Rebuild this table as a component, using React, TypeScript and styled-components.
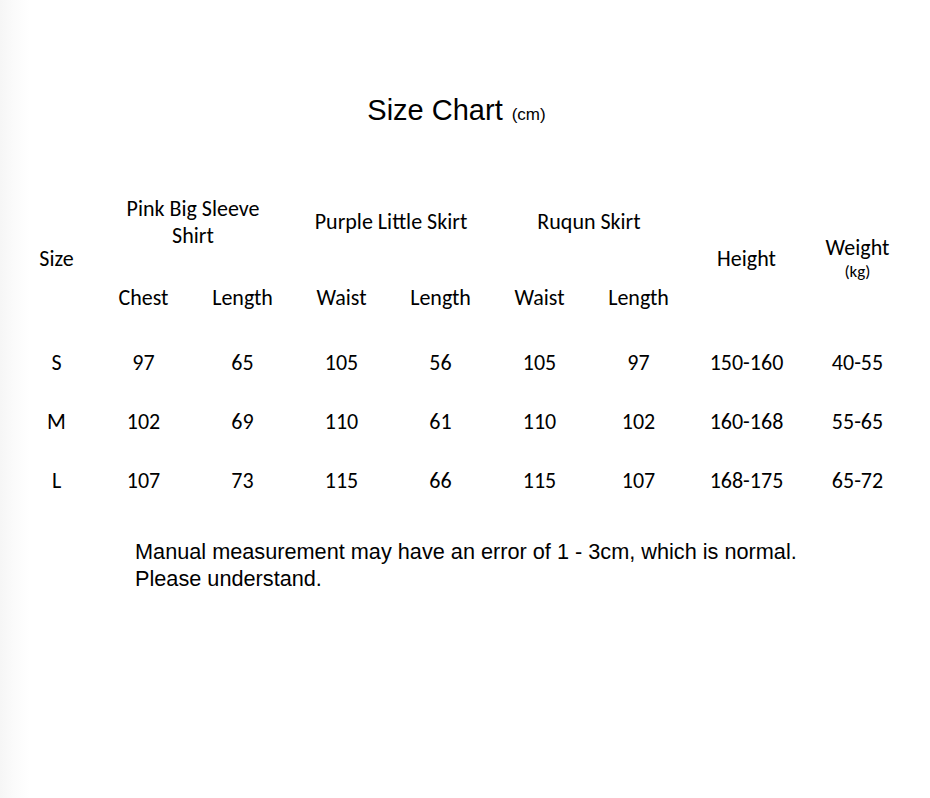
import React from "react";
import styled, { createGlobalStyle } from "styled-components";

const Global = createGlobalStyle`
  html, body { margin: 0; padding: 0; background: #fff; }
  body { width: 930px; height: 798px; overflow: hidden; }
`;

const Page = styled.div`
  width: 930px;
  height: 798px;
  box-sizing: border-box;
  background: linear-gradient(to right, #f6f6f6 0px, #fbfbfb 14px, #ffffff 30px);
  display: flex;
  flex-direction: column;
  color: #000;
`;

const Title = styled.h1`
  margin: 93px 0 0 0;
  font-family: "Liberation Sans", Arial, sans-serif;
  font-weight: 400;
  font-size: 29px;
  line-height: 34px;
  text-align: center;
  padding-right: 17px;
`;

const Unit = styled.span`
  font-size: 17px;
  margin-left: 9px;
`;

const Table = styled.div`
  margin: 50.5px 0 0 19px;
  display: grid;
  grid-template-columns: 75px repeat(6, 99px) 117px 105px;
  grid-template-rows: 78px 73px 58px 59px 59px;
  font-family: Carlito, Calibri, "Lato", sans-serif;
  font-size: 22px;
  line-height: 27px;
  text-align: center;
`;

const Cell = styled.div<{ $span?: number; $rows?: number }>`
  grid-column: span ${(p) => p.$span ?? 1};
  grid-row: span ${(p) => p.$rows ?? 1};
  display: flex;
  flex-direction: column;
  justify-content: center;
  align-items: center;
`;

const Small = styled.span`
  font-size: 17px;
  line-height: 22px;
`;

const Note = styled.p`
  margin: 28px 0 0 135px;
  font-family: "Liberation Sans", Arial, sans-serif;
  font-size: 21.7px;
  line-height: 27px;
`;

const rows = [
  ["S", "97", "65", "105", "56", "105", "97", "150-160", "40-55"],
  ["M", "102", "69", "110", "61", "110", "102", "160-168", "55-65"],
  ["L", "107", "73", "115", "66", "115", "107", "168-175", "65-72"],
];

export default function App() {
  return (
    <Page>
      <Global />
      <Title>
        Size Chart<Unit>(cm)</Unit>
      </Title>
      <Table>
        <Cell $rows={2}>Size</Cell>
        <Cell $span={2}>
          <span>Pink Big Sleeve</span>
          <span>Shirt</span>
        </Cell>
        <Cell $span={2}>Purple Little Skirt</Cell>
        <Cell $span={2}>Ruqun Skirt</Cell>
        <Cell $rows={2}>Height</Cell>
        <Cell $rows={2}>
          <span>Weight</span>
          <Small>(kg)</Small>
        </Cell>
        <Cell>Chest</Cell>
        <Cell>Length</Cell>
        <Cell>Waist</Cell>
        <Cell>Length</Cell>
        <Cell>Waist</Cell>
        <Cell>Length</Cell>
        {rows.map((r) => r.map((v, i) => <Cell key={r[0] + i}>{v}</Cell>))}
      </Table>
      <Note>
        Manual measurement may have an error of 1 - 3cm, which is normal.
        <br />
        Please understand.
      </Note>
    </Page>
  );
}
